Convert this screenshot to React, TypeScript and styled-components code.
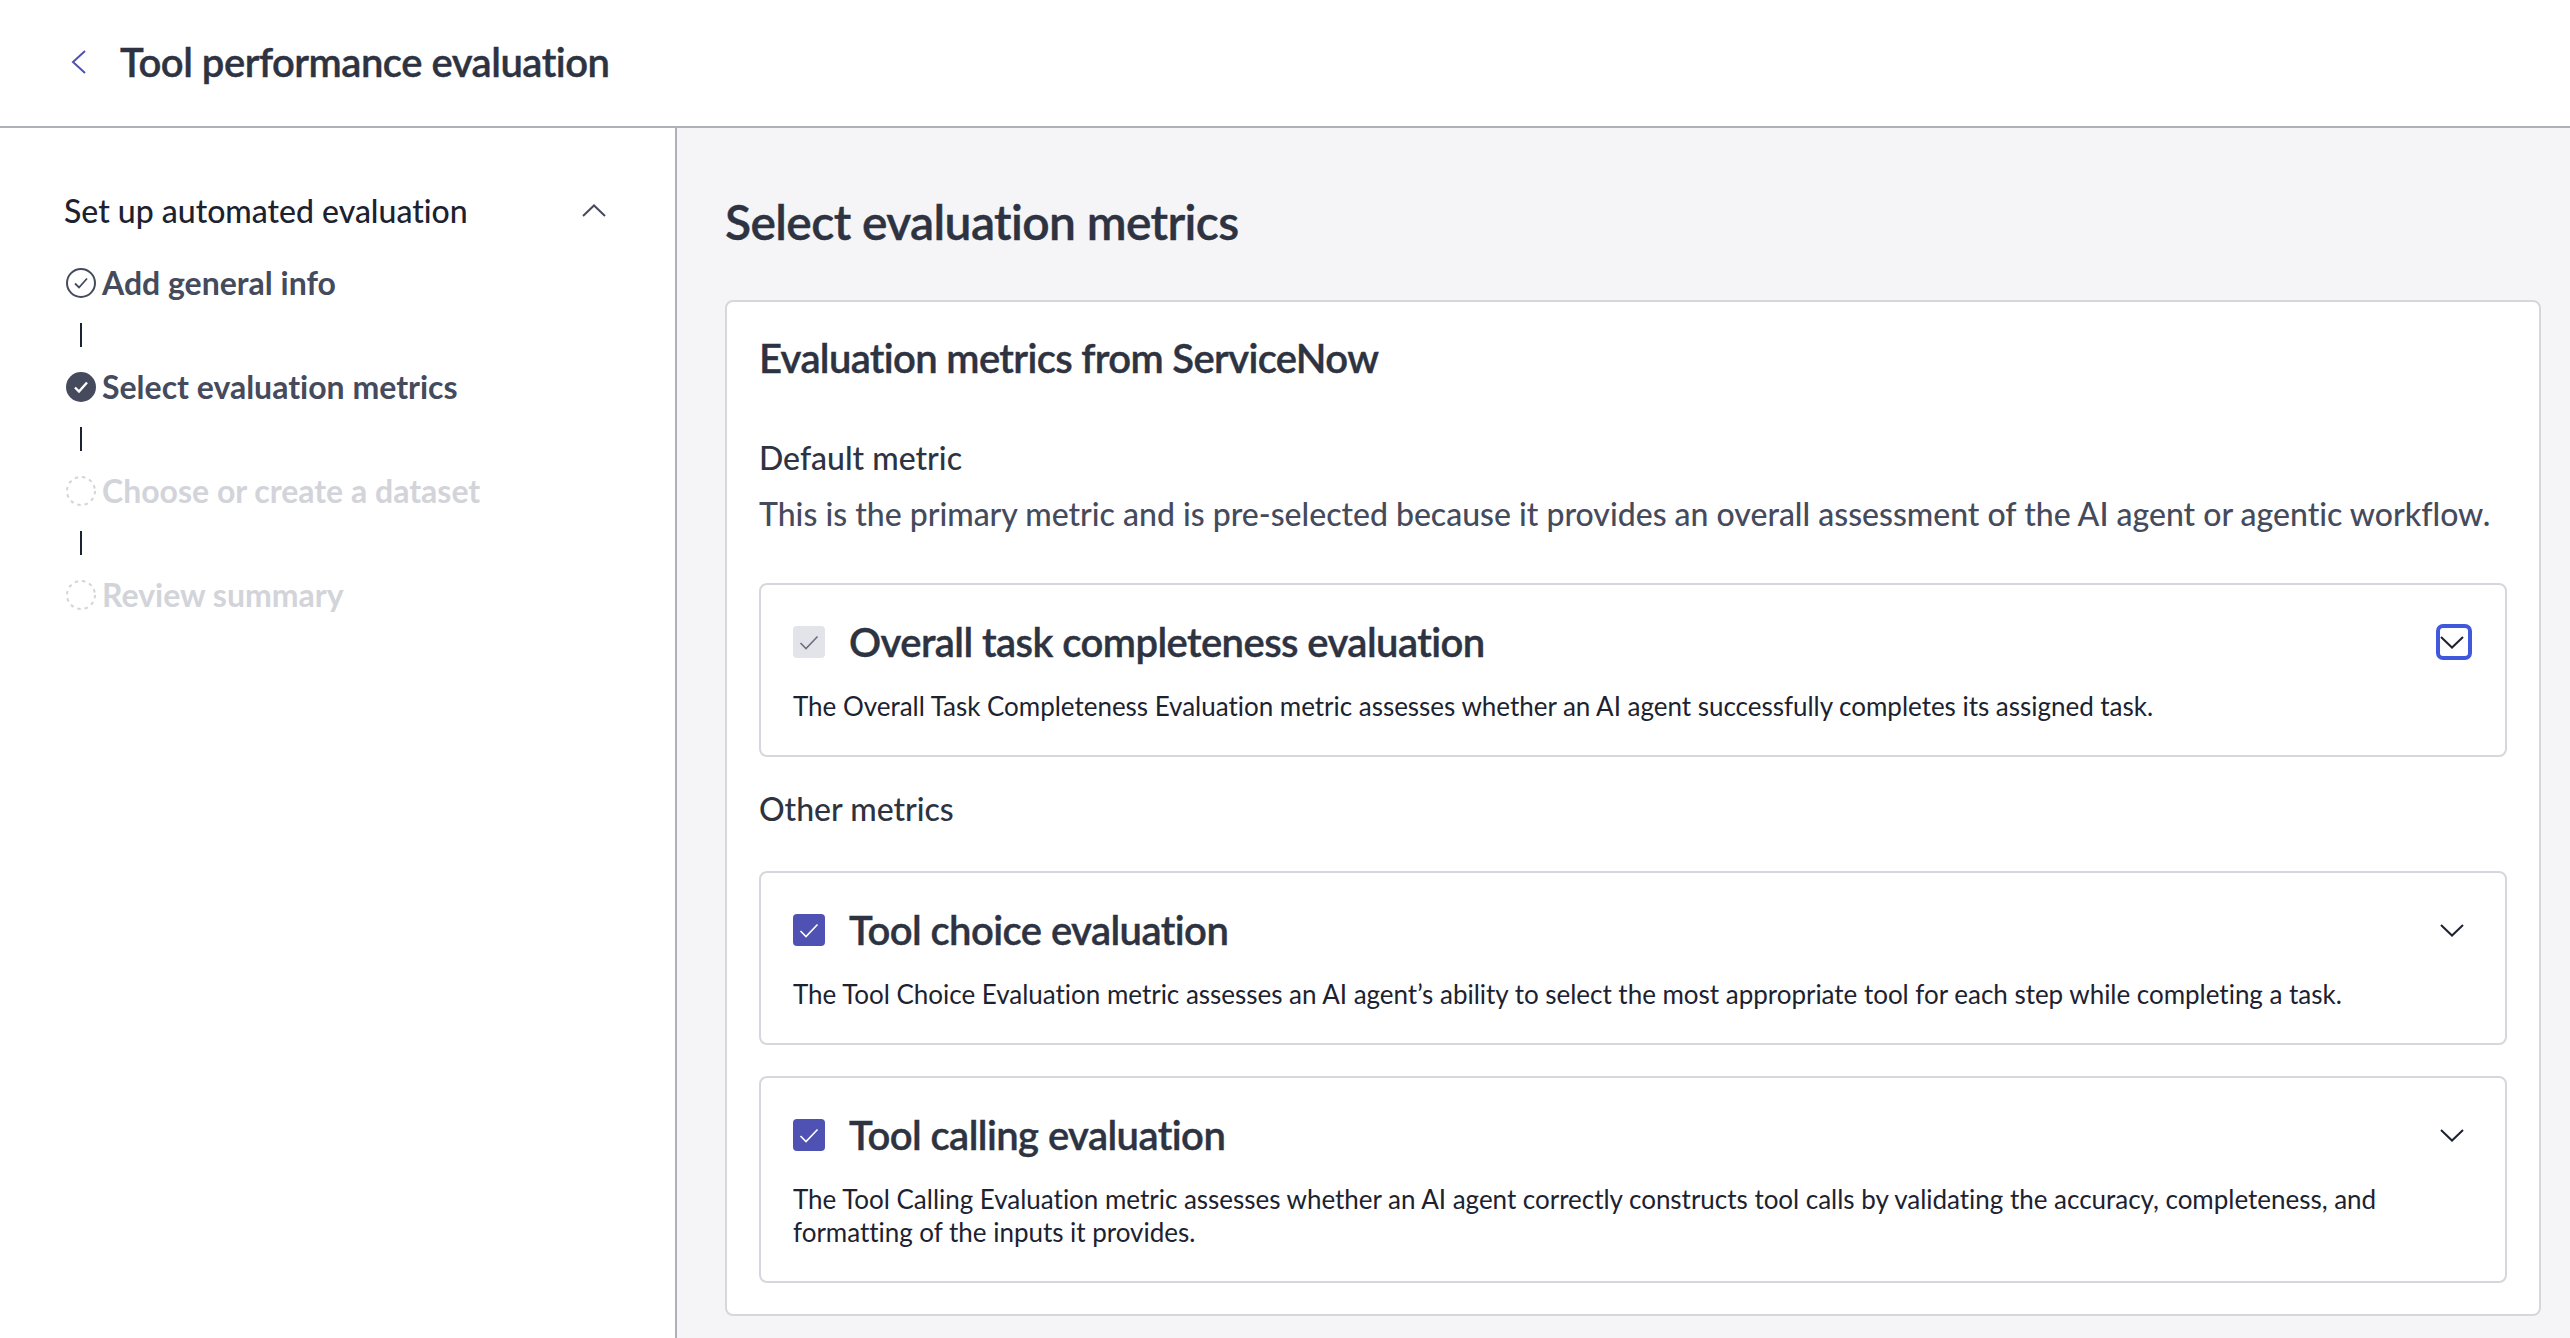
import React from 'react';
import styled, { createGlobalStyle } from 'styled-components';

const GlobalStyle = createGlobalStyle`
    html, body {
        margin: 0;
        padding: 0;
        height: 100%;
        overflow: hidden;
        background: #ffffff;
        font-family: Lato, "Liberation Sans", sans-serif;
        font-variant-ligatures: none;
    }
    * { box-sizing: border-box; }
`;

const Page = styled.div`
    display: flex;
    flex-direction: column;
    height: 1338px;
    overflow: hidden;
`;

const Header = styled.header`
    display: flex;
    align-items: center;
    flex: 0 0 128px;
    padding: 0 0 3px 70px;
    border-bottom: 2px solid #aeb2b8;
`;

const BackButton = styled.button`
    display: flex;
    width: 20px;
    height: 26px;
    margin-right: 30px;
    padding: 0;
    border: 0;
    background: none;
`;

const PageTitle = styled.h1`
    margin: 0;
    font-size: 40px;
    line-height: 52px;
    font-weight: 600;
    letter-spacing: -0.5px;
    -webkit-text-stroke: 0.4px #2e3342;
    color: #2e3342;
`;

const Body = styled.div`
    display: flex;
    flex: 1;
    min-height: 0;
`;

const Sidebar = styled.aside`
    flex: 0 0 677px;
    padding: 60px 69px 0 64px;
    border-right: 2px solid #aeb2b8;
`;

const SidebarHead = styled.div`
    display: flex;
    align-items: center;
    justify-content: space-between;
    height: 44px;
    margin-bottom: 31px;
    font-size: 32px;
    font-weight: 500;
    color: #1c2230;
`;

const StepRow = styled.div`
    display: flex;
    align-items: center;
    gap: 6px;
    height: 40px;
`;

const StepLabel = styled.span<{ $muted?: boolean }>`
    font-size: 32px;
    font-weight: 700;
    line-height: 40px;
    color: ${p => (p.$muted ? '#d2d4da' : '#454b5c')};
`;

const Connector = styled.div`
    width: 2px;
    height: 24px;
    margin: 20px 0 20px 16px;
    background: #1c2230;
`;

const Main = styled.main`
    flex: 1;
    min-width: 0;
    padding: 62px 29px 0 48px;
    background: #f5f5f7;
`;

const MainTitle = styled.h2`
    margin: 0 0 46px;
    font-size: 48px;
    line-height: 64px;
    font-weight: 600;
    letter-spacing: -0.62px;
    -webkit-text-stroke: 0.4px #2e3342;
    color: #2e3342;
`;

const Panel = styled.section`
    padding: 30px 32px 31px;
    border: 2px solid #d6d7dd;
    border-radius: 8px;
    background: #ffffff;
`;

const PanelTitle = styled.h3`
    margin: 0 0 52px;
    font-size: 40px;
    line-height: 52px;
    font-weight: 600;
    letter-spacing: -0.65px;
    -webkit-text-stroke: 0.4px #2e3342;
    color: #2e3342;
`;

const SectionLabel = styled.div`
    font-size: 32px;
    line-height: 44px;
    font-weight: 500;
    color: #2e3342;
`;

const Lead = styled.p`
    margin: 12px 0 47px;
    font-size: 32px;
    line-height: 44px;
    font-weight: 500;
    letter-spacing: 0;
    color: #454b5c;
    white-space: nowrap;
`;

const OtherLabel = styled(SectionLabel)`
    margin: 30px 0 40px;
`;

const MetricCard = styled.article<{ $h: number }>`
    padding: 31px 32px 0;
    height: ${p => p.$h}px;
    border: 2px solid #d6d7dd;
    border-radius: 8px;
    background: #ffffff;
    & + & { margin-top: 31px; }
`;

const MetricHead = styled.div`
    display: flex;
    align-items: center;
    height: 52px;
`;

const Check = styled.span<{ $locked?: boolean }>`
    display: flex;
    align-items: center;
    justify-content: center;
    flex: 0 0 32px;
    height: 32px;
    margin-right: 24px;
    border-radius: 4px;
    background: ${p => (p.$locked ? '#e3e4e9' : '#4f52b2')};
`;

const MetricTitle = styled.h4`
    flex: 1;
    margin: 0;
    font-size: 40px;
    line-height: 52px;
    font-weight: 600;
    letter-spacing: -0.57px;
    -webkit-text-stroke: 0.4px #2e3342;
    color: #2e3342;
`;

const Toggle = styled.button<{ $focused?: boolean }>`
    display: flex;
    align-items: center;
    justify-content: center;
    width: 36px;
    height: 36px;
    margin-right: 1px;
    padding: 0 4px 0 0;
    border: 4px solid ${p => (p.$focused ? '#4058dc' : 'transparent')};
    border-radius: 7px;
    background: none;
`;

const MetricText = styled.p`
    margin: 22px 0 0;
    max-width: 1640px;
    font-size: 26px;
    line-height: 33px;
    font-weight: 400;
    letter-spacing: -0.02px;
    color: #1c2230;
`;

const Chevron = ({ dir, color = '#1c2230' }: { dir: 'up' | 'down'; color?: string }) => (
    <svg width="24" height="13" viewBox="0 0 24 13" fill="none" style={{ flex: '0 0 24px' }}>
        <path
            d={dir === 'up' ? 'M1 12 12 1.5 23 12' : 'M1 1 12 11.5 23 1'}
            stroke={color}
            strokeWidth="2"
        />
    </svg>
);

const Tick = ({ color }: { color: string }) => (
    <svg width="20" height="15" viewBox="0 0 20 15" fill="none">
        <path d="M1.5 8 7 13.5 18.5 1.5" stroke={color} strokeWidth="1.6" />
    </svg>
);

const StepIcon = ({ state }: { state: 'done' | 'active' | 'todo' }) => (
    <svg width="32" height="32" viewBox="-1 0 32 32" fill="none" style={{ flex: '0 0 32px' }}>
        {state === 'done' && (
            <>
                <circle cx="16" cy="16" r="14" stroke="#454b5c" strokeWidth="2" />
                <path d="M10 16.5 14 20.5 22 11.5" stroke="#454b5c" strokeWidth="1.8" />
            </>
        )}
        {state === 'active' && (
            <>
                <circle cx="16" cy="16" r="15" fill="#454b5c" />
                <path d="M10 16.5 14 20.5 22 11.5" stroke="#ffffff" strokeWidth="2.4" />
            </>
        )}
        {state === 'todo' && (
            <circle cx="16" cy="16" r="14" stroke="#d2d4da" strokeWidth="2" strokeDasharray="3.4 4" />
        )}
    </svg>
);

const steps: { label: string; state: 'done' | 'active' | 'todo' }[] = [
    { label: 'Add general info', state: 'done' },
    { label: 'Select evaluation metrics', state: 'active' },
    { label: 'Choose or create a dataset', state: 'todo' },
    { label: 'Review summary', state: 'todo' },
];

const otherMetrics = [
    {
        title: 'Tool choice evaluation',
        text: 'The Tool Choice Evaluation metric assesses an AI agent’s ability to select the most appropriate tool for each step while completing a task.',
        height: 174,
    },
    {
        title: 'Tool calling evaluation',
        text: 'The Tool Calling Evaluation metric assesses whether an AI agent correctly constructs tool calls by validating the accuracy, completeness, and formatting of the inputs it provides.',
        height: 207,
    },
];

const App = () => {
    return (
        <Page>
            <GlobalStyle />
            <Header>
                <BackButton>
                    <svg width="20" height="26" viewBox="0 0 20 26" fill="none">
                        <path d="M15 2 3 13 15 24" stroke="#4f52b2" strokeWidth="2" />
                    </svg>
                </BackButton>
                <PageTitle>Tool performance evaluation</PageTitle>
            </Header>
            <Body>
                <Sidebar>
                    <SidebarHead>
                        Set up automated evaluation
                        <Chevron dir="up" color="#454b5c" />
                    </SidebarHead>
                    {steps.map((step, index) => (
                        <React.Fragment key={step.label}>
                            <StepRow>
                                <StepIcon state={step.state} />
                                <StepLabel $muted={step.state === 'todo'}>{step.label}</StepLabel>
                            </StepRow>
                            {index < steps.length - 1 && <Connector />}
                        </React.Fragment>
                    ))}
                </Sidebar>
                <Main>
                    <MainTitle>Select evaluation metrics</MainTitle>
                    <Panel>
                        <PanelTitle>Evaluation metrics from ServiceNow</PanelTitle>
                        <SectionLabel>Default metric</SectionLabel>
                        <Lead>
                            This is the primary metric and is pre-selected because it provides an overall assessment of the AI agent or agentic workflow.
                        </Lead>
                        <MetricCard $h={174}>
                            <MetricHead>
                                <Check $locked><Tick color="#6b7080" /></Check>
                                <MetricTitle>Overall task completeness evaluation</MetricTitle>
                                <Toggle $focused><Chevron dir="down" /></Toggle>
                            </MetricHead>
                            <MetricText>
                                The Overall Task Completeness Evaluation metric assesses whether an AI agent successfully completes its assigned task.
                            </MetricText>
                        </MetricCard>
                        <OtherLabel>Other metrics</OtherLabel>
                        {otherMetrics.map(metric => (
                            <MetricCard $h={metric.height} key={metric.title}>
                                <MetricHead>
                                    <Check><Tick color="#ffffff" /></Check>
                                    <MetricTitle>{metric.title}</MetricTitle>
                                    <Toggle><Chevron dir="down" /></Toggle>
                                </MetricHead>
                                <MetricText>{metric.text}</MetricText>
                            </MetricCard>
                        ))}
                    </Panel>
                </Main>
            </Body>
        </Page>
    );
};

export default App;
